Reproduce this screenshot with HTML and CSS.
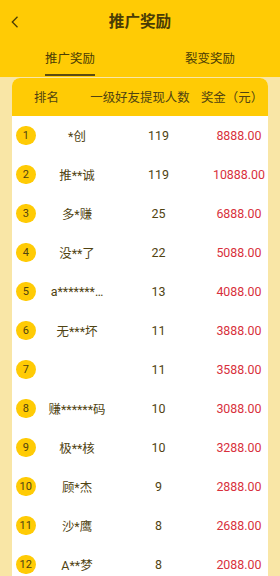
FILE: index.html
```html
<!DOCTYPE html>
<html lang="zh-CN">
<head>
<meta charset="utf-8">
<link rel="stylesheet" href="styles.css">
</head>
<body>
<header class="top">
  <div class="bar">
    <svg class="back" width="8" height="12" viewBox="0 0 8 12"><polyline points="6.5,0.8 1.3,6 6.5,11.2" fill="none" stroke="#4a3c06" stroke-width="1.3"/></svg>
    <h1 class="title">推广奖励</h1>
  </div>
  <nav class="tabs">
    <div class="tab"><span class="tab-label active">推广奖励</span></div>
    <div class="tab"><span class="tab-label">裂变奖励</span></div>
  </nav>
</header>
<main class="card">
  <div class="thead">
    <span>排名</span>
    <span>一级好友提现人数</span>
    <span>奖金（元）</span>
  </div>
  <div class="row"><span class="rank">1</span><span class="name">*创</span><span class="count">119</span><span class="amount">8888.00</span></div>
  <div class="row"><span class="rank">2</span><span class="name">推**诚</span><span class="count">119</span><span class="amount">10888.00</span></div>
  <div class="row"><span class="rank">3</span><span class="name">多*赚</span><span class="count">25</span><span class="amount">6888.00</span></div>
  <div class="row"><span class="rank">4</span><span class="name">没**了</span><span class="count">22</span><span class="amount">5088.00</span></div>
  <div class="row"><span class="rank">5</span><span class="name">a*******…</span><span class="count">13</span><span class="amount">4088.00</span></div>
  <div class="row"><span class="rank">6</span><span class="name">无***坏</span><span class="count">11</span><span class="amount">3888.00</span></div>
  <div class="row"><span class="rank">7</span><span class="name"></span><span class="count">11</span><span class="amount">3588.00</span></div>
  <div class="row"><span class="rank">8</span><span class="name">赚******码</span><span class="count">10</span><span class="amount">3088.00</span></div>
  <div class="row"><span class="rank">9</span><span class="name">极**核</span><span class="count">10</span><span class="amount">3288.00</span></div>
  <div class="row"><span class="rank">10</span><span class="name">顾*杰</span><span class="count">9</span><span class="amount">2888.00</span></div>
  <div class="row"><span class="rank">11</span><span class="name">沙*鹰</span><span class="count">8</span><span class="amount">2688.00</span></div>
  <div class="row"><span class="rank">12</span><span class="name">A**梦</span><span class="count">8</span><span class="amount">2088.00</span></div>
</main>
</body>
</html>
```
FILE: styles.css
```css
* { box-sizing: border-box; }
html, body { margin: 0; padding: 0; }
body {
  width: 280px;
  min-height: 576px;
  background: #f9e6a6;
  font-family: Roboto, "Noto Sans CJK SC", sans-serif;
  color: #504312;
  font-size: 12.44px;
  overflow: hidden;
}
.top {
  background: #ffcb05;
}
.bar {
  height: 44px;
  display: flex;
  align-items: center;
  justify-content: center;
  position: relative;
}
.back {
  position: absolute;
  left: 11px;
  top: 16px;
}
.title {
  margin: 0;
  font-size: 15.6px;
  font-weight: 700;
  color: #4a3c06;
  line-height: 20px;
}
.tabs {
  height: 33px;
  display: flex;
  padding-top: 6px;
}
.tab {
  flex: 1;
  display: flex;
  justify-content: center;
  align-items: flex-start;
}
.tab-label {
  display: inline-block;
  line-height: 17px;
  padding-bottom: 7px;
  border-bottom: 2px solid transparent;
  color: #4a3c06;
}
.tab-label.active {
  border-bottom-color: #5a4a10;
}
.card {
  margin: 1px 12px 0;
  background: #ffffff;
  border-radius: 8px 8px 0 0;
  overflow: hidden;
}
.thead {
  height: 38px;
  background: #ffcb05;
  display: grid;
  grid-template-columns: 69px 118px 1fr;
  padding-right: 3px;
  align-items: center;
  text-align: center;
  color: #504312;
  white-space: nowrap;
}
.row {
  height: 39px;
  display: grid;
  grid-template-columns: 35px 60px 1fr 58px;
  align-items: center;
  text-align: center;
  white-space: nowrap;
}
.rank {
  width: 19.5px;
  height: 19.5px;
  margin-left: 4px;
  border-radius: 50%;
  background: #ffcb05;
  display: flex;
  align-items: center;
  justify-content: center;
  font-size: 11px;
  color: #504312;
}
.name {
  display: flex;
  justify-content: center;
}
.count {
  color: #504312;
}
.amount {
  color: #d8303c;
  display: flex;
  justify-content: center;
}
```
